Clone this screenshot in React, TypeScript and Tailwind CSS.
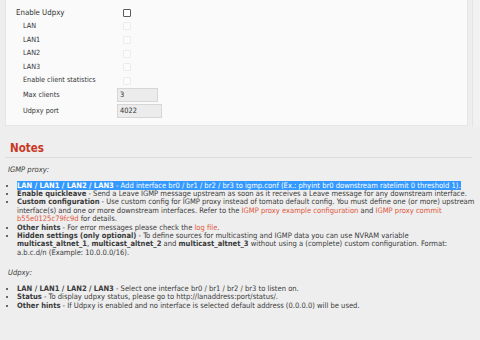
import React from 'react'

const font = { fontFamily: '"DejaVu Sans Condensed", "DejaVu Sans", sans-serif' }

function Check({ enabled }: { enabled?: boolean }) {
  return (
    <span
      className={
        enabled
          ? 'block w-[8px] h-[8px] rounded-[1px] border border-[#5a5a5a] bg-white'
          : 'block w-[8px] h-[8px] rounded-[1px] border border-[#ececec] bg-[#fbfbfb]'
      }
    />
  )
}

function Row({ label, sub, children, tall }: { label: string; sub?: boolean; children: React.ReactNode; tall?: boolean }) {
  return (
    <div className={`flex items-center ${tall ? 'h-[15.6px]' : 'h-[13.6px]'}`}>
      <div className={`w-[111px] ${sub ? 'pl-[17px] text-[7.2px]' : 'pl-[10px] text-[7.8px]'} text-[#333]`}>{label}</div>
      {children}
    </div>
  )
}

function Link({ children }: { children: React.ReactNode }) {
  return <span className="text-[#e2573d]">{children}</span>
}

export default function App() {
  return (
    <div className="w-[480px] h-[340px] overflow-hidden bg-[#eeeeee] font-stretch-condensed" style={font}>
      <div className="flex h-[127px]">
        <div className="ml-[5px] w-[463px] h-[126px] bg-[#fafafa] border-x border-b border-[#e6e6e6] pt-[6px]">
          <Row label="Enable Udpxy">
            <span className="pl-[6px]"><Check enabled /></span>
          </Row>
          <Row label="LAN" sub>
            <span className="pl-[6px]"><Check /></span>
          </Row>
          <Row label="LAN1" sub>
            <span className="pl-[6px]"><Check /></span>
          </Row>
          <Row label="LAN2" sub>
            <span className="pl-[6px]"><Check /></span>
          </Row>
          <Row label="LAN3" sub>
            <span className="pl-[6px]"><Check /></span>
          </Row>
          <Row label="Enable client statistics" sub>
            <span className="pl-[6px]"><Check /></span>
          </Row>
          <Row label="Max clients" sub tall>
            <div className="w-[41px] h-[14px] bg-[#ececec] border border-[#d6d6d6] text-[7.4px] text-[#333] pl-[2px] leading-[12px]">3</div>
          </Row>
          <Row label="Udpxy port" sub tall>
            <div className="w-[45px] h-[14px] bg-[#ececec] border border-[#d6d6d6] text-[7.4px] text-[#333] pl-[2px] leading-[12px]">4022</div>
          </Row>
        </div>
        <div className="ml-[4px] flex-1 bg-[#f1f1f1] border-l border-[#e4e4e4]" />
      </div>

      <div className="mt-[12px] ml-[5px] w-[467px] border-b border-[#dcdcdc] h-[19px] pl-[5px] text-[11.5px] leading-[19px] font-bold text-[#c9371f]">
        Notes
      </div>

      <div className="pl-[8px] text-[7.55px] leading-[8.4px] text-[#3a3a3a] whitespace-nowrap">
        <p className="mt-[7.6px] italic">IGMP proxy:</p>
        <ul className="mt-[7.6px] list-disc pl-[9px]">
          <li>
            <span className="bg-[#3399ff] text-white">
              <b>LAN / LAN1 / LAN2 / LAN3</b> - Add interface br0 / br1 / br2 / br3 to igmp.conf (Ex.: phyint br0 downstream ratelimit 0 threshold 1).
            </span>
          </li>
          <li>
            <b>Enable quickleave</b> - Send a Leave IGMP message upstream as soon as it receives a Leave message for any downstream interface.
          </li>
          <li>
            <b>Custom configuration</b> - Use custom config for IGMP proxy instead of tomato default config. You must define one (or more) upstream
            <br />
            interface(s) and one or more downstream interfaces. Refer to the <Link>IGMP proxy example configuration</Link> and <Link>IGMP proxy commit</Link>
            <br />
            <Link>b55e0125c79fc9d</Link> for details.
          </li>
          <li>
            <b>Other hints</b> - For error messages please check the <Link>log file</Link>.
          </li>
          <li>
            <b>Hidden settings (only optional)</b> - To define sources for multicasting and IGMP data you can use NVRAM variable
            <br />
            <b>multicast_altnet_1</b>, <b>multicast_altnet_2</b> and <b>multicast_altnet_3</b> without using a (complete) custom configuration. Format:
            <br />
            a.b.c.d/n (Example: 10.0.0.0/16).
          </li>
        </ul>
        <p className="mt-[11.6px] italic">Udpxy:</p>
        <ul className="mt-[7.6px] list-disc pl-[9px]">
          <li>
            <b>LAN / LAN1 / LAN2 / LAN3</b> - Select one interface br0 / br1 / br2 / br3 to listen on.
          </li>
          <li>
            <b>Status</b> - To display udpxy status, please go to http://lanaddress:port/status/.
          </li>
          <li>
            <b>Other hints</b> - If Udpxy is enabled and no interface is selected default address (0.0.0.0) will be used.
          </li>
        </ul>
      </div>
    </div>
  )
}
